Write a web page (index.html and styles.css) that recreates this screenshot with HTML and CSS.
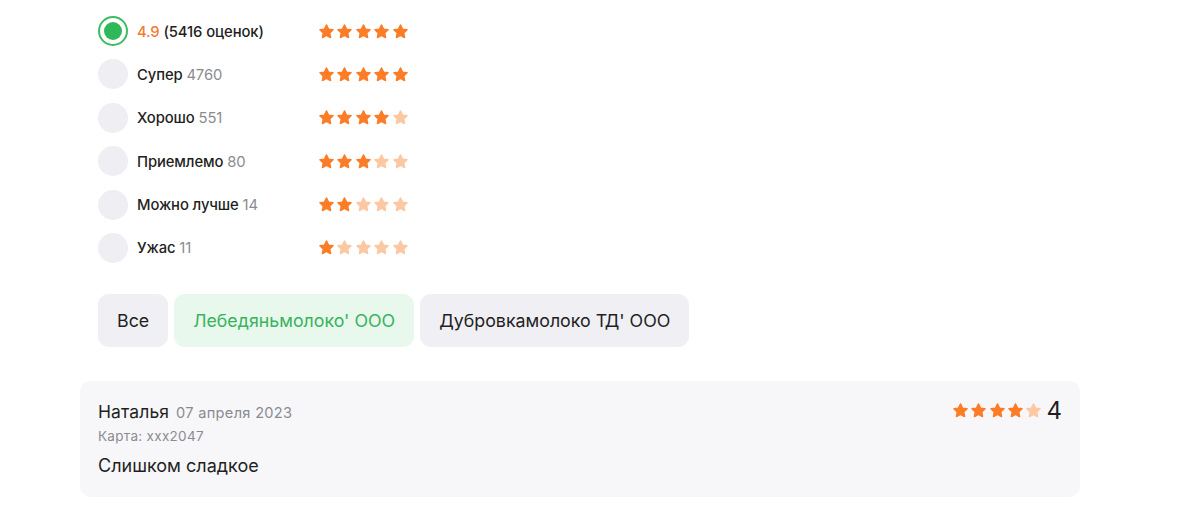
FILE: index.html
```html
<!DOCTYPE html>
<html lang="ru">
<head>
<meta charset="utf-8">
<link rel="stylesheet" href="styles.css">
</head>
<body>
<svg width="0" height="0" class="defs">
  <defs>
    <symbol id="star" viewBox="0 0 24 24">
      <path d="M12 2.8l2.8 5.9 6.4.8-4.7 4.5 1.2 6.4L12 17.3l-5.7 3.1 1.2-6.4-4.7-4.5 6.4-.8z" stroke-linejoin="round" stroke-width="2.2"/>
    </symbol>
  </defs>
</svg>
<main class="page">
  <div class="filters">
    <div class="row">
      <span class="radio radio--on"><span class="dot"></span></span>
      <span class="label"><span class="avg">4.9</span> (5416 оценок)</span>
      <span class="stars"><svg class="s on"><use href="#star"/></svg><svg class="s on"><use href="#star"/></svg><svg class="s on"><use href="#star"/></svg><svg class="s on"><use href="#star"/></svg><svg class="s on"><use href="#star"/></svg></span>
    </div>
    <div class="row">
      <span class="radio"></span>
      <span class="label">Супер <span class="cnt">4760</span></span>
      <span class="stars"><svg class="s on"><use href="#star"/></svg><svg class="s on"><use href="#star"/></svg><svg class="s on"><use href="#star"/></svg><svg class="s on"><use href="#star"/></svg><svg class="s on"><use href="#star"/></svg></span>
    </div>
    <div class="row">
      <span class="radio"></span>
      <span class="label">Хорошо <span class="cnt">551</span></span>
      <span class="stars"><svg class="s on"><use href="#star"/></svg><svg class="s on"><use href="#star"/></svg><svg class="s on"><use href="#star"/></svg><svg class="s on"><use href="#star"/></svg><svg class="s off"><use href="#star"/></svg></span>
    </div>
    <div class="row">
      <span class="radio"></span>
      <span class="label">Приемлемо <span class="cnt">80</span></span>
      <span class="stars"><svg class="s on"><use href="#star"/></svg><svg class="s on"><use href="#star"/></svg><svg class="s on"><use href="#star"/></svg><svg class="s off"><use href="#star"/></svg><svg class="s off"><use href="#star"/></svg></span>
    </div>
    <div class="row">
      <span class="radio"></span>
      <span class="label">Можно лучше <span class="cnt">14</span></span>
      <span class="stars"><svg class="s on"><use href="#star"/></svg><svg class="s on"><use href="#star"/></svg><svg class="s off"><use href="#star"/></svg><svg class="s off"><use href="#star"/></svg><svg class="s off"><use href="#star"/></svg></span>
    </div>
    <div class="row">
      <span class="radio"></span>
      <span class="label">Ужас <span class="cnt">11</span></span>
      <span class="stars"><svg class="s on"><use href="#star"/></svg><svg class="s off"><use href="#star"/></svg><svg class="s off"><use href="#star"/></svg><svg class="s off"><use href="#star"/></svg><svg class="s off"><use href="#star"/></svg></span>
    </div>
  </div>

  <div class="tabs">
    <button class="tab">Все</button>
    <button class="tab tab--active">Лебедяньмолоко' ООО</button>
    <button class="tab">Дубровкамолоко ТД' ООО</button>
  </div>

  <article class="review">
    <div class="review-main">
      <div class="review-head">
        <span class="name">Наталья</span>
        <span class="date">07 апреля 2023</span>
      </div>
      <div class="card">Карта: ххх2047</div>
      <p class="text">Слишком сладкое</p>
    </div>
    <div class="review-rate">
      <span class="stars stars--sm"><svg class="s on"><use href="#star"/></svg><svg class="s on"><use href="#star"/></svg><svg class="s on"><use href="#star"/></svg><svg class="s on"><use href="#star"/></svg><svg class="s off"><use href="#star"/></svg></span>
      <span class="score">4</span>
    </div>
  </article>
</main>
</body>
</html>
```

FILE: styles.css
```css
* { box-sizing: border-box; }
html, body { margin: 0; padding: 0; background: #fff; }
body {
  font-family: Inter, "Noto Sans", "Liberation Sans", sans-serif;
  color: #1f1f23;
}
.defs { position: absolute; width: 0; height: 0; overflow: hidden; }

.page {
  width: 1000px;
  margin-left: 80px;
  padding-top: 16px;
}

.filters {
  padding-left: 18px;
  display: flex;
  flex-direction: column;
  gap: 13.4px;
}
.row {
  display: flex;
  align-items: center;
  height: 30px;
}
.radio {
  width: 30px;
  height: 30px;
  border-radius: 50%;
  background: #eeeef3;
  flex: none;
  display: flex;
  align-items: center;
  justify-content: center;
}
.radio--on {
  background: #fff;
  border: 2px solid #3cbc62;
}
.radio--on .dot {
  width: 18px;
  height: 18px;
  border-radius: 50%;
  background: #2fb859;
}
.label {
  margin-left: 9px;
  width: 181px;
  font-size: 14.8px;
  font-weight: 500;
  color: #1f1f23;
  letter-spacing: -0.1px;
  padding-top: 1px;
}
.avg { color: #f27d2e; }
.cnt { color: #8b8b90; font-weight: 400; }

.stars { display: flex; gap: 1.4px; }
.s { width: 17px; height: 17px; }
.s.on { fill: #fb7d28; stroke: #fb7d28; }
.s.off { fill: #fcc8a3; stroke: #fcc8a3; }

.tabs {
  display: flex;
  gap: 6px;
  margin-top: 31px;
  padding-left: 18px;
}
.tab {
  height: 53px;
  border: none;
  border-radius: 11px;
  background: #f0f0f4;
  font-family: inherit;
  font-size: 17.8px;
  color: #1f1f23;
  padding: 0 19px;
  cursor: pointer;
}
.tab--active {
  background: #e8f8ed;
  color: #39b35c;
}

.review {
  margin-top: 34px;
  background: #f7f7f9;
  border-radius: 11px;
  height: 116px;
  padding: 20px 18px 0 18px;
  display: flex;
  justify-content: space-between;
  align-items: flex-start;
}
.review-head { display: flex; align-items: baseline; gap: 7px; }
.name { font-size: 17.5px; color: #1f1f23; letter-spacing: 0.1px; }
.date { font-size: 14.6px; color: #8b8b90; letter-spacing: 0.3px; }
.card { margin-top: 6px; font-size: 13.5px; color: #8b8b90; letter-spacing: 0.3px; }
.text { margin: 11px 0 0; font-size: 18px; color: #1f1f23; }

.review-rate { display: flex; align-items: center; gap: 4px; margin-top: -2px; }
.stars--sm { gap: 1.4px; }
.stars--sm .s { width: 17px; height: 17px; }
.score { font-size: 24px; color: #1f1f23; line-height: 1; }
```
